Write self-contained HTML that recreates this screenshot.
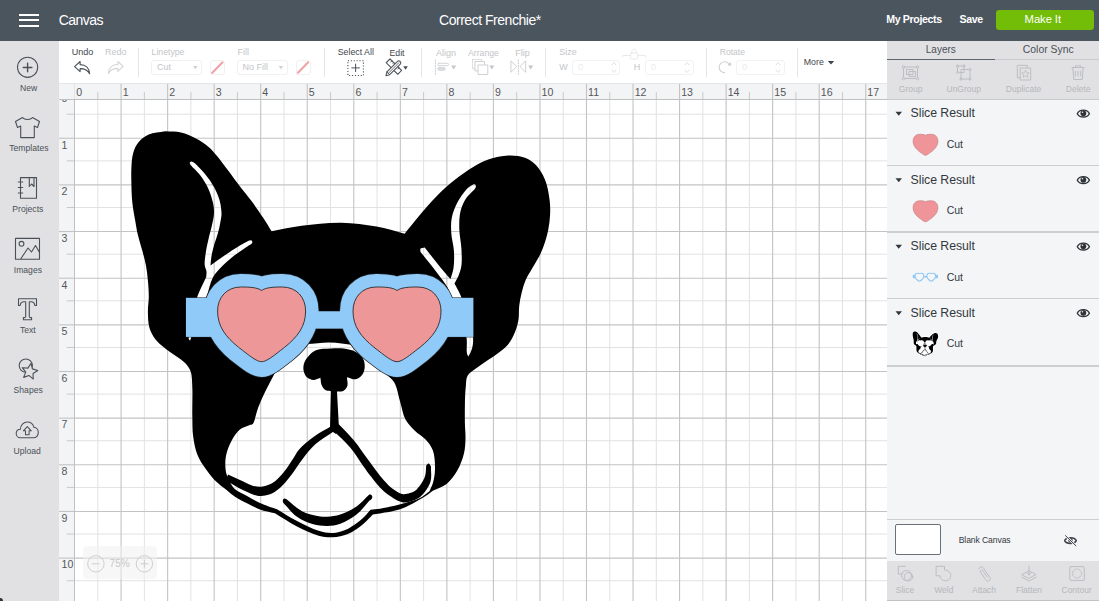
<!DOCTYPE html>
<html><head><meta charset="utf-8">
<style>
*{margin:0;padding:0;box-sizing:border-box}
html,body{width:1099px;height:601px;overflow:hidden;background:#fff;font-family:"Liberation Sans",sans-serif}
.a{position:absolute;white-space:nowrap;line-height:1}
svg.a{overflow:visible}
.sl{font-size:8.6px;color:#4a5058}
.tl{font-size:9px;color:#3f454c}
.dis{color:#c3c5c8}
.sep{position:absolute;width:1px;background:#e6e6e6;top:48px;height:29px}
.box{position:absolute;border:1px solid #f1f1f1;border-radius:3px;height:15px;top:60px}
.lr{font-size:12.3px;color:#33383d;letter-spacing:-0.05px}
.cut{font-size:10.5px;color:#33383d}
.rsep{position:absolute;left:887px;width:212px;height:1.5px;background:#cdced0}
.bl{font-size:8.5px;color:#b5b7ba}
</style></head><body>
<div class="a" style="left:0;top:0;width:1099px;height:41px;background:#4b555e"></div>
<div class="a" style="left:19px;top:13.8px;width:19.6px;height:1.8px;background:#fff"></div>
<div class="a" style="left:19px;top:19.3px;width:19.6px;height:1.8px;background:#fff"></div>
<div class="a" style="left:19px;top:24.9px;width:19.6px;height:1.8px;background:#fff"></div>
<div class="a" style="left:58.8px;top:13.1px;font-size:14px;color:#fff;letter-spacing:-0.55px">Canvas</div>
<div class="a" style="left:439px;top:13.0px;font-size:14px;color:#fff;letter-spacing:-0.47px">Correct Frenchie*</div>
<div class="a" style="left:886.2px;top:14.2px;font-size:10.6px;font-weight:bold;color:#fff;letter-spacing:-0.35px">My Projects</div>
<div class="a" style="left:959.5px;top:14.0px;font-size:10.6px;font-weight:bold;color:#fff;letter-spacing:-0.35px">Save</div>
<div class="a" style="left:996px;top:9.8px;width:97.5px;height:19.8px;background:#73bc07;border-radius:3px"></div>
<div class="a" style="left:1024.6px;top:14.3px;font-size:11.3px;color:#fff;letter-spacing:-0.1px">Make It</div>

<!-- left sidebar -->
<div class="a" style="left:0;top:41px;width:59px;height:560px;background:#e1e1e3"></div>
<svg class="a" style="left:0;top:0" width="59" height="601" fill="none" stroke="#4a5058" stroke-width="1.1" stroke-linejoin="round" stroke-linecap="round">
 <circle cx="27.6" cy="67.3" r="10.1"/>
 <path d="M23.3,67.5 H31.9 M27.6,63.3 V71.8" stroke-width="1.4"/>
 <!-- tshirt -->
 <path d="M22.5,117.6 C24.5,120.2 30.5,120.2 32.5,117.6 L39.5,121.5 L37.5,127.5 L34.3,126 L34.3,137.6 H20.7 V126 L17.5,127.5 L15.5,121.5 Z"/>
 <!-- projects notebook -->
 <path d="M20.5,177.6 H36.5 V198.2 H20.5 Z M29.3,177.6 V186.5 L31.6,184 L34,186.5 V177.6 M18.3,182 H22.7 M18.3,187.5 H22.7 M18.3,193 H22.7"/>
 <!-- images -->
 <path d="M15.5,238.4 H39.5 V259.2 H15.5 Z M20.5,259.2 L28,248 L31.5,252 L35.5,245.5 L39.5,252.5"/>
 <circle cx="21.5" cy="243.8" r="2.4"/>
 <!-- text T -->
 <path d="M18.5,298.8 H36.5 V305.5 L34.8,305.5 C34.5,302.5 33.5,301.8 31,301.8 H29.3 V316.7 C29.3,317.4 29.8,317.6 30.8,317.6 H31.6 V319.8 H23.4 V317.6 H24.2 C25.2,317.6 25.7,317.4 25.7,316.7 V301.8 H24 C21.5,301.8 20.5,302.5 20.2,305.5 L18.5,305.5 Z"/>
 <!-- shapes -->
 <circle cx="25.8" cy="365.6" r="6.6"/>
 <path d="M31.04,363.43 L32.41,368.89 L37.82,370.44 L33.04,373.43 L33.24,379.06 L28.92,375.44 L23.63,377.37 L25.74,372.14 L22.27,367.70 L27.89,368.09 Z" fill="#e1e1e3"/>
 <!-- upload cloud -->
 <path d="M20.5,437.8 C17.8,437.8 16.2,435.6 16.2,433.4 C16.2,431 18,429.2 20.4,429.2 C20.4,425 23.6,422 27.3,422 C30.6,422 33.2,424.3 33.9,427.3 C36.4,427.5 38.3,429.8 38.3,432.6 C38.3,435.5 36.2,437.8 33.6,437.8 Z"/>
 <path d="M27.3,426.6 L31.3,430.8 H29.1 V434.8 H25.5 V430.8 H23.3 Z" stroke-width="1.05"/>
</svg>
<div class="a sl" style="left:20px;top:83.6px">New</div>
<div class="a sl" style="left:9.3px;top:144.1px">Templates</div>
<div class="a sl" style="left:12.3px;top:204.7px">Projects</div>
<div class="a sl" style="left:13.8px;top:265.5px">Images</div>
<div class="a sl" style="left:20px;top:326.0px">Text</div>
<div class="a sl" style="left:13.6px;top:386.3px">Shapes</div>
<div class="a sl" style="left:13.6px;top:447.1px">Upload</div>

<!-- toolbar -->
<div class="a" style="left:59px;top:41px;width:828px;height:42px;background:#fff"></div>
<div class="a tl" style="left:71.8px;top:48.4px">Undo</div>
<div class="a tl dis" style="left:105px;top:48.4px">Redo</div>
<svg class="a" style="left:0;top:0" width="887" height="83" fill="none" stroke-linejoin="round" stroke-linecap="round">
 <path d="M80.1,61.5 L74.6,66.6 L80.1,71.6 V68.6 C84.2,68.6 87.8,70 89.6,73.8 C89.4,68.3 85.8,64.6 80.1,64.6 Z" stroke="#4a5058" stroke-width="1.1"/>
 <path d="M117.9,61.5 L123.2,66.4 L117.9,71.4 V68.4 C113.9,68.4 110.3,69.8 108.4,73.6 C108.6,68.1 112.2,64.4 117.9,64.4 Z" stroke="#d3d5d8" stroke-width="1.1"/>
 <!-- select all -->
 <rect x="347.9" y="60.7" width="15.5" height="14.8" stroke="#4a5058" stroke-width="1.1" stroke-dasharray="1.1 1.8" stroke-linecap="butt"/>
 <path d="M351.8,67.9 H359.4 M355.6,64.1 V71.6" stroke="#4a5058" stroke-width="1"/>
 <!-- edit icon -->
 <g transform="translate(393.9,66.6) rotate(45)" stroke="#4a5058" stroke-width="1.05">
  <rect x="-8.2" y="-2.7" width="16.4" height="5.4" fill="#fff"/>
  <path d="M-5.5,-2.7 v1.8 M-3,-2.7 v1.1 M-0.5,-2.7 v1.8 M2,-2.7 v1.1 M4.5,-2.7 v1.8" stroke-width="0.8"/>
 </g>
 <g transform="translate(393.6,68) rotate(-45)" stroke="#4a5058" stroke-width="1.05">
  <path d="M-7.5,-2 H7.5 C8.6,-2 9.2,-1.1 9.2,0 C9.2,1.1 8.6,2 7.5,2 H-7.5 L-10.8,0 Z" fill="#fff"/>
  <path d="M-7.5,-2 V2 M-7.5,0 H7.5" stroke-width="0.8"/>
 </g>
 <path d="M403.2,66.2 H407.9 L405.55,69.8 Z" fill="#4a5058" stroke="none"/>
 <!-- align -->
 <path d="M435.4,59.8 V74.5" stroke="#cfd1d4" stroke-width="1" stroke-dasharray="1.3 1.4"/>
 <rect x="437.8" y="63.3" width="10.7" height="2.3" rx="1.1" stroke="#cfd1d4" stroke-width="0.9"/>
 <rect x="437.8" y="67.4" width="7.4" height="2.8" rx="1.4" fill="#dcdee0" stroke="#cfd1d4" stroke-width="0.9"/>
 <path d="M451.2,65.6 H456.1 L453.65,69.6 Z" fill="#c3c5c8" stroke="none"/>
 <!-- arrange -->
 <rect x="472.6" y="59.6" width="9.2" height="9.2" stroke="#cfd1d4" stroke-width="0.9" stroke-dasharray="1.2 1.2"/>
 <rect x="475.3" y="61.5" width="9.2" height="9.4" stroke="#cfd1d4" stroke-width="1" fill="#fff"/>
 <rect x="478.4" y="65" width="9.4" height="9.5" stroke="#cfd1d4" stroke-width="1" fill="#fff"/>
 <path d="M489.4,65.6 H494.3 L491.85,69.6 Z" fill="#c3c5c8" stroke="none"/>
 <!-- flip -->
 <path d="M511.2,61.1 L516.7,66.6 L511.2,72 Z M525.4,61.1 L519.9,66.6 L525.4,72 Z" stroke="#cfd1d4" stroke-width="1"/>
 <path d="M518.4,59.8 V74.5" stroke="#cfd1d4" stroke-width="1" stroke-dasharray="1.3 1.4"/>
 <path d="M528.2,65.6 H533.1 L530.65,69.6 Z" fill="#c3c5c8" stroke="none"/>
 <!-- linetype swatch -->
 <path d="M211.8,73.3 L222.6,62.3" stroke="#eea3a8" stroke-width="2.1"/>
 <path d="M297.4,73.3 L308.2,62.3" stroke="#eea3a8" stroke-width="2.1"/>
 <path d="M193,66 H197.6 L195.3,69.2 Z M278.6,66 H283.2 L280.9,69.2 Z" fill="#cfd1d4" stroke="none"/>
 <!-- lock -->
 <path d="M622.8,57 V55.5 H630 M638.3,55.5 H645.5 V57" stroke="#e6e7e9" stroke-width="0.9"/>
 <rect x="630.6" y="53" width="7" height="6" rx="1" stroke="#e6e7e9" stroke-width="0.9"/>
 <path d="M631.8,53 V51.5 C631.8,48.5 636.4,48.5 636.4,51.5 V53" stroke="#e6e7e9" stroke-width="0.9"/>
 <!-- spinners -->
 <path d="M612,65 L614,62.5 L616,65 M612,70 L614,72.5 L616,70 M685,65 L687,62.5 L689,65 M685,70 L687,72.5 L689,70 M776,65 L778,62.5 L780,65 M776,70 L778,72.5 L780,70" stroke="#dedfe1" stroke-width="0.9"/>
 <!-- rotate -->
 <path d="M729.4,65.3 C728.5,63 726.5,61.8 724.6,61.8 C721.6,61.8 719.2,64.2 719.2,67.2 C719.2,70.2 721.6,72.6 724.6,72.6" stroke="#cfd1d4" stroke-width="1.1"/>
 <path d="M727.5,65.5 L731.5,65.5 L730.5,61.8 Z" fill="#cfd1d4" stroke="none"/>
 <!-- more -->
 <path d="M827.8,61 H834.2 L831,64.5 Z" fill="#3f454c" stroke="none"/>
</svg>
<div class="sep" style="left:137.7px"></div>
<div class="sep" style="left:323.8px"></div>
<div class="sep" style="left:420.5px"></div>
<div class="sep" style="left:545.3px"></div>
<div class="sep" style="left:705.8px"></div>
<div class="sep" style="left:797.3px"></div>
<div class="a tl dis" style="left:151.6px;top:48.4px;font-size:8.7px">Linetype</div>
<div class="box" style="left:151.4px;width:51px"></div>
<div class="a tl dis" style="left:157px;top:62.8px">Cut</div>
<div class="box" style="left:209.8px;width:15px"></div>
<div class="a tl dis" style="left:237.6px;top:48.4px">Fill</div>
<div class="box" style="left:237.4px;width:51px"></div>
<div class="a tl dis" style="left:242.5px;top:62.8px">No Fill</div>
<div class="box" style="left:295.8px;width:15px"></div>
<div class="a tl" style="left:337.7px;top:48.3px;font-size:8.8px">Select All</div>
<div class="a tl" style="left:389.5px;top:48.8px;font-size:8.7px">Edit</div>
<div class="a tl dis" style="left:436px;top:48.8px">Align</div>
<div class="a tl dis" style="left:468px;top:48.8px;font-size:8.7px">Arrange</div>
<div class="a tl dis" style="left:515.3px;top:48.8px">Flip</div>
<div class="a tl dis" style="left:559.2px;top:48.4px">Size</div>
<div class="a tl dis" style="left:559.3px;top:63px">W</div>
<div class="box" style="left:571.8px;width:48px;border-color:#f2f2f2"></div>
<div class="a tl" style="left:578px;top:63px;color:#eceded">0</div>
<div class="a tl dis" style="left:633.7px;top:63px">H</div>
<div class="box" style="left:644.6px;width:49px;border-color:#f2f2f2"></div>
<div class="a tl" style="left:651px;top:63px;color:#eceded">0</div>
<div class="a tl dis" style="left:719.7px;top:48.4px;font-size:8.6px">Rotate</div>
<div class="box" style="left:736px;width:48.5px;border-color:#f2f2f2"></div>
<div class="a tl" style="left:742px;top:63px;color:#eceded">0</div>
<div class="a tl" style="left:803.8px;top:57.6px;font-size:8.8px">More</div>

<!-- CANVAS -->
<svg class="a" style="left:0;top:0;font-family:'Liberation Sans'" width="1099" height="601">
<rect x="74.5" y="99.5" width="812.5" height="502" fill="#fff"/>
<line x1="97.82" y1="100" x2="97.82" y2="601" stroke="#e2e2e2" stroke-width="1"/>
<line x1="144.36" y1="100" x2="144.36" y2="601" stroke="#e2e2e2" stroke-width="1"/>
<line x1="190.90" y1="100" x2="190.90" y2="601" stroke="#e2e2e2" stroke-width="1"/>
<line x1="237.44" y1="100" x2="237.44" y2="601" stroke="#e2e2e2" stroke-width="1"/>
<line x1="283.98" y1="100" x2="283.98" y2="601" stroke="#e2e2e2" stroke-width="1"/>
<line x1="330.52" y1="100" x2="330.52" y2="601" stroke="#e2e2e2" stroke-width="1"/>
<line x1="377.06" y1="100" x2="377.06" y2="601" stroke="#e2e2e2" stroke-width="1"/>
<line x1="423.60" y1="100" x2="423.60" y2="601" stroke="#e2e2e2" stroke-width="1"/>
<line x1="470.14" y1="100" x2="470.14" y2="601" stroke="#e2e2e2" stroke-width="1"/>
<line x1="516.68" y1="100" x2="516.68" y2="601" stroke="#e2e2e2" stroke-width="1"/>
<line x1="563.22" y1="100" x2="563.22" y2="601" stroke="#e2e2e2" stroke-width="1"/>
<line x1="609.76" y1="100" x2="609.76" y2="601" stroke="#e2e2e2" stroke-width="1"/>
<line x1="656.30" y1="100" x2="656.30" y2="601" stroke="#e2e2e2" stroke-width="1"/>
<line x1="702.84" y1="100" x2="702.84" y2="601" stroke="#e2e2e2" stroke-width="1"/>
<line x1="749.38" y1="100" x2="749.38" y2="601" stroke="#e2e2e2" stroke-width="1"/>
<line x1="795.92" y1="100" x2="795.92" y2="601" stroke="#e2e2e2" stroke-width="1"/>
<line x1="842.46" y1="100" x2="842.46" y2="601" stroke="#e2e2e2" stroke-width="1"/>
<line x1="74.5" y1="114.22" x2="887" y2="114.22" stroke="#e2e2e2" stroke-width="1"/>
<line x1="74.5" y1="160.88" x2="887" y2="160.88" stroke="#e2e2e2" stroke-width="1"/>
<line x1="74.5" y1="207.53" x2="887" y2="207.53" stroke="#e2e2e2" stroke-width="1"/>
<line x1="74.5" y1="254.18" x2="887" y2="254.18" stroke="#e2e2e2" stroke-width="1"/>
<line x1="74.5" y1="300.82" x2="887" y2="300.82" stroke="#e2e2e2" stroke-width="1"/>
<line x1="74.5" y1="347.47" x2="887" y2="347.47" stroke="#e2e2e2" stroke-width="1"/>
<line x1="74.5" y1="394.12" x2="887" y2="394.12" stroke="#e2e2e2" stroke-width="1"/>
<line x1="74.5" y1="440.78" x2="887" y2="440.78" stroke="#e2e2e2" stroke-width="1"/>
<line x1="74.5" y1="487.43" x2="887" y2="487.43" stroke="#e2e2e2" stroke-width="1"/>
<line x1="74.5" y1="534.07" x2="887" y2="534.07" stroke="#e2e2e2" stroke-width="1"/>
<line x1="74.5" y1="580.72" x2="887" y2="580.72" stroke="#e2e2e2" stroke-width="1"/>
<line x1="74.5" y1="627.38" x2="887" y2="627.38" stroke="#e2e2e2" stroke-width="1"/>
<line x1="121.09" y1="100" x2="121.09" y2="601" stroke="#c3c3c3" stroke-width="1.1"/>
<line x1="167.63" y1="100" x2="167.63" y2="601" stroke="#c3c3c3" stroke-width="1.1"/>
<line x1="214.17" y1="100" x2="214.17" y2="601" stroke="#c3c3c3" stroke-width="1.1"/>
<line x1="260.71" y1="100" x2="260.71" y2="601" stroke="#c3c3c3" stroke-width="1.1"/>
<line x1="307.25" y1="100" x2="307.25" y2="601" stroke="#c3c3c3" stroke-width="1.1"/>
<line x1="353.79" y1="100" x2="353.79" y2="601" stroke="#c3c3c3" stroke-width="1.1"/>
<line x1="400.33" y1="100" x2="400.33" y2="601" stroke="#c3c3c3" stroke-width="1.1"/>
<line x1="446.87" y1="100" x2="446.87" y2="601" stroke="#c3c3c3" stroke-width="1.1"/>
<line x1="493.41" y1="100" x2="493.41" y2="601" stroke="#c3c3c3" stroke-width="1.1"/>
<line x1="539.95" y1="100" x2="539.95" y2="601" stroke="#c3c3c3" stroke-width="1.1"/>
<line x1="586.49" y1="100" x2="586.49" y2="601" stroke="#c3c3c3" stroke-width="1.1"/>
<line x1="633.03" y1="100" x2="633.03" y2="601" stroke="#c3c3c3" stroke-width="1.1"/>
<line x1="679.57" y1="100" x2="679.57" y2="601" stroke="#c3c3c3" stroke-width="1.1"/>
<line x1="726.11" y1="100" x2="726.11" y2="601" stroke="#c3c3c3" stroke-width="1.1"/>
<line x1="772.65" y1="100" x2="772.65" y2="601" stroke="#c3c3c3" stroke-width="1.1"/>
<line x1="819.19" y1="100" x2="819.19" y2="601" stroke="#c3c3c3" stroke-width="1.1"/>
<line x1="865.73" y1="100" x2="865.73" y2="601" stroke="#c3c3c3" stroke-width="1.1"/>
<line x1="74.5" y1="138.25" x2="887" y2="138.25" stroke="#c3c3c3" stroke-width="1.1"/>
<line x1="74.5" y1="184.90" x2="887" y2="184.90" stroke="#c3c3c3" stroke-width="1.1"/>
<line x1="74.5" y1="231.55" x2="887" y2="231.55" stroke="#c3c3c3" stroke-width="1.1"/>
<line x1="74.5" y1="278.20" x2="887" y2="278.20" stroke="#c3c3c3" stroke-width="1.1"/>
<line x1="74.5" y1="324.85" x2="887" y2="324.85" stroke="#c3c3c3" stroke-width="1.1"/>
<line x1="74.5" y1="371.50" x2="887" y2="371.50" stroke="#c3c3c3" stroke-width="1.1"/>
<line x1="74.5" y1="418.15" x2="887" y2="418.15" stroke="#c3c3c3" stroke-width="1.1"/>
<line x1="74.5" y1="464.80" x2="887" y2="464.80" stroke="#c3c3c3" stroke-width="1.1"/>
<line x1="74.5" y1="511.45" x2="887" y2="511.45" stroke="#c3c3c3" stroke-width="1.1"/>
<line x1="74.5" y1="558.10" x2="887" y2="558.10" stroke="#c3c3c3" stroke-width="1.1"/>
<defs><mask id="dm" maskUnits="userSpaceOnUse" x="0" y="0" width="1099" height="601">
<rect x="0" y="0" width="1099" height="601" fill="#fff"/>
<path d="M306.6,344.1 C314.4,343.5 322.1,342.3 329.9,342.4 C337.7,342.5 345.4,344.1 353.2,344.9 L353.2,344.9 C359.5,347.3 367.0,347.8 372.0,352.0 C377.5,356.6 380.1,365.6 384.1,372.4 L384.1,372.4 C387.4,375.6 391.4,377.8 394.0,382.0 C397.1,387.0 398.1,394.9 400.0,401.2 C401.9,407.4 402.8,414.4 405.5,419.5 C407.9,423.9 411.2,427.1 414.6,430.5 C418.0,433.9 422.5,436.2 425.6,439.6 C428.6,442.9 431.3,446.2 432.9,450.6 C434.8,455.8 435.1,463.7 435.0,469.3 C434.9,473.9 434.2,478.2 433.2,482.0 C432.3,485.4 430.7,488.1 429.5,491.2 L429.5,491.2 C426.3,493.5 423.8,496.1 420.0,498.0 C415.1,500.4 408.4,502.0 402.1,503.7 C395.2,505.6 385.8,507.7 380.0,508.7 C376.2,509.3 373.7,509.4 370.6,509.7 L370.6,509.7 C367.7,512.8 365.4,515.9 361.9,518.9 C357.5,522.6 351.0,527.4 345.7,529.8 C341.3,531.7 337.1,532.8 332.7,533.0 C328.1,533.2 323.8,532.3 318.7,530.8 C312.1,528.9 304.0,524.7 297.0,521.1 C290.0,517.5 283.3,513.0 276.5,509.0 L276.5,509.0 C276.1,508.9 276.0,508.9 275.4,508.7 C273.2,508.0 264.8,505.2 260.0,503.0 C255.5,501.0 251.7,498.6 247.5,496.3 C243.3,494.0 237.8,491.7 235.0,489.3 C233.2,487.8 232.5,486.2 231.3,484.6 L231.3,484.6 C229.7,481.3 227.6,478.1 226.6,474.6 C225.6,471.2 225.3,467.5 225.3,464.0 C225.3,460.4 225.6,457.0 226.6,453.3 C227.7,449.0 229.7,444.0 232.0,440.0 C234.2,436.1 236.7,432.0 239.9,429.5 C242.8,427.2 246.6,426.4 249.9,424.9 L249.9,424.9 C250.8,424.6 251.8,424.9 252.7,424.0 C254.8,421.9 256.1,413.0 258.2,407.6 C260.3,402.1 262.8,396.7 265.5,391.1 C268.4,385.1 271.8,378.9 275.0,372.8 L275.0,372.8 C280.0,365.9 284.2,356.9 290.0,352.0 C294.9,347.9 301.1,346.7 306.6,344.1 Z" fill="#000"/>
<path d="M191.0,161.5 C191.7,161.7 192.1,161.5 193.0,162.0 C195.5,163.4 201.5,169.8 205.0,174.0 C208.4,178.1 211.5,182.5 214.0,187.0 C216.3,191.2 218.2,195.6 219.5,200.0 C220.7,204.3 221.4,209.1 221.5,213.0 C221.6,216.3 220.9,218.9 220.4,222.0 C219.8,225.5 219.0,229.4 218.0,233.0 C217.0,236.7 215.5,240.2 214.4,244.0 C213.3,247.9 212.2,252.2 211.5,256.0 C210.9,259.3 210.8,262.3 210.5,265.5 L210.5,265.5 C215.3,262.1 220.0,258.5 224.9,255.2 C229.8,251.9 235.5,248.1 239.9,245.5 C243.1,243.6 245.6,242.4 248.5,240.8 L248.5,240.8 C249.5,240.7 250.9,240.1 251.5,240.5 C252.1,240.9 252.5,242.1 252.3,242.8 C252.1,243.5 251.1,243.9 250.5,244.5 L250.5,244.5 C249.5,245.1 248.8,245.5 247.4,246.4 C244.3,248.5 237.0,253.2 232.4,256.9 C228.0,260.4 223.8,264.3 220.4,268.0 C217.5,271.2 215.0,273.5 212.9,277.5 C210.1,282.7 208.9,290.4 206.4,297.1 C203.7,304.5 199.8,312.5 197.0,320.0 C194.4,327.0 192.5,333.7 190.2,340.5 L190.2,340.5 C189.7,340.0 189.1,339.9 188.8,339.0 C188.0,336.3 190.7,326.6 192.0,320.0 C193.4,312.7 194.8,304.4 197.2,297.1 C199.6,290.0 203.2,283.6 206.2,276.9 L206.2,276.9 C206.3,275.1 206.7,273.4 206.5,271.5 C206.3,269.4 204.9,267.6 204.7,264.9 C204.4,261.0 205.5,254.5 206.2,250.0 C206.8,246.3 207.5,243.7 208.3,240.0 C209.3,235.5 211.0,229.8 212.0,225.1 C212.9,220.9 213.9,216.8 214.0,213.0 C214.1,209.5 213.8,206.6 213.0,203.0 C212.0,198.5 210.2,192.7 208.0,188.0 C205.8,183.4 203.0,179.0 200.0,175.0 C197.0,171.0 191.0,166.2 190.0,164.0 C189.7,163.3 189.9,162.9 189.8,162.3 Z" fill="#000"/>
<path d="M475.1,184.2 C475.4,185.1 476.1,185.8 475.9,186.9 C475.3,189.6 468.4,194.5 465.8,198.8 C463.3,202.8 461.5,207.0 460.4,211.7 C459.2,217.0 459.2,223.1 459.3,229.0 C459.4,235.3 461.1,242.2 461.4,248.5 C461.7,254.4 462.1,260.7 461.4,265.7 C460.8,269.8 459.5,273.3 458.2,276.5 C457.1,279.1 455.7,281.2 454.5,283.5 L454.5,283.5 C456.5,287.3 458.4,290.5 460.4,294.9 C462.9,300.6 465.9,308.1 468.0,315.0 C470.1,322.1 472.5,331.3 473.0,337.0 C473.3,340.6 473.1,343.2 472.6,346.0 C472.1,348.5 471.2,351.1 470.3,353.0 C469.7,354.4 469.0,355.3 468.3,356.4 L468.3,356.4 C467.8,355.3 467.2,354.6 466.9,353.0 C466.2,349.7 467.5,342.5 466.4,337.0 C465.1,330.8 461.4,324.4 459.0,318.0 C456.5,311.5 453.8,303.7 451.7,298.1 C450.1,293.9 449.5,291.1 447.4,287.3 C444.8,282.5 440.6,277.6 436.6,272.2 C431.8,265.8 425.8,258.5 420.4,251.7 L420.4,251.7 C420.5,250.7 420.0,249.3 420.6,248.6 C421.3,247.8 423.3,247.8 424.7,247.4 L424.7,247.4 C430.1,254.2 436.1,262.2 440.9,267.9 C444.5,272.2 447.3,275.3 450.5,279.0 L450.5,279.0 C451.5,275.3 452.9,272.0 453.5,267.9 C454.2,262.8 454.3,256.4 453.9,250.6 C453.5,244.8 451.6,238.9 451.3,233.3 C451.0,228.1 450.8,223.2 451.7,218.2 C452.7,213.1 454.6,207.9 457.1,203.1 C459.6,198.1 463.6,192.3 466.8,189.0 C469.0,186.7 471.3,185.9 473.5,184.3 Z" fill="#000"/>
</mask>
<mask id="dm2" maskUnits="userSpaceOnUse" x="0" y="0" width="1099" height="601">
<rect x="0" y="0" width="1099" height="601" fill="#fff"/>
<path d="M306.6,344.1 C314.4,343.5 322.1,342.3 329.9,342.4 C337.7,342.5 345.4,344.1 353.2,344.9 L353.2,344.9 C359.5,347.3 367.0,347.8 372.0,352.0 C377.5,356.6 380.1,365.6 384.1,372.4 L384.1,372.4 C387.4,375.6 391.4,377.8 394.0,382.0 C397.1,387.0 398.1,394.9 400.0,401.2 C401.9,407.4 402.8,414.4 405.5,419.5 C407.9,423.9 411.2,427.1 414.6,430.5 C418.0,433.9 422.5,436.2 425.6,439.6 C428.6,442.9 431.3,446.2 432.9,450.6 C434.8,455.8 435.1,463.7 435.0,469.3 C434.9,473.9 434.2,478.2 433.2,482.0 C432.3,485.4 430.7,488.1 429.5,491.2 L429.5,491.2 C426.3,493.5 423.8,496.1 420.0,498.0 C415.1,500.4 408.4,502.0 402.1,503.7 C395.2,505.6 385.8,507.7 380.0,508.7 C376.2,509.3 373.7,509.4 370.6,509.7 L370.6,509.7 C367.7,512.8 365.4,515.9 361.9,518.9 C357.5,522.6 351.0,527.4 345.7,529.8 C341.3,531.7 337.1,532.8 332.7,533.0 C328.1,533.2 323.8,532.3 318.7,530.8 C312.1,528.9 304.0,524.7 297.0,521.1 C290.0,517.5 283.3,513.0 276.5,509.0 L276.5,509.0 C276.1,508.9 276.0,508.9 275.4,508.7 C273.2,508.0 264.8,505.2 260.0,503.0 C255.5,501.0 251.7,498.6 247.5,496.3 C243.3,494.0 237.8,491.7 235.0,489.3 C233.2,487.8 232.5,486.2 231.3,484.6 L231.3,484.6 C229.7,481.3 227.6,478.1 226.6,474.6 C225.6,471.2 225.3,467.5 225.3,464.0 C225.3,460.4 225.6,457.0 226.6,453.3 C227.7,449.0 229.7,444.0 232.0,440.0 C234.2,436.1 236.7,432.0 239.9,429.5 C242.8,427.2 246.6,426.4 249.9,424.9 L249.9,424.9 C250.8,424.6 251.8,424.9 252.7,424.0 C254.8,421.9 256.1,413.0 258.2,407.6 C260.3,402.1 262.8,396.7 265.5,391.1 C268.4,385.1 271.8,378.9 275.0,372.8 L275.0,372.8 C280.0,365.9 284.2,356.9 290.0,352.0 C294.9,347.9 301.1,346.7 306.6,344.1 Z" fill="#000"/>
<path d="M191.0,161.5 C191.7,161.7 192.1,161.5 193.0,162.0 C195.5,163.4 201.5,169.8 205.0,174.0 C208.4,178.1 211.5,182.5 214.0,187.0 C216.3,191.2 218.2,195.6 219.5,200.0 C220.7,204.3 221.4,209.1 221.5,213.0 C221.6,216.3 220.9,218.9 220.4,222.0 C219.8,225.5 219.0,229.4 218.0,233.0 C217.0,236.7 215.5,240.2 214.4,244.0 C213.3,247.9 212.2,252.2 211.5,256.0 C210.9,259.3 210.8,262.3 210.5,265.5 L210.5,265.5 C215.3,262.1 220.0,258.5 224.9,255.2 C229.8,251.9 235.5,248.1 239.9,245.5 C243.1,243.6 245.6,242.4 248.5,240.8 L248.5,240.8 C249.5,240.7 250.9,240.1 251.5,240.5 C252.1,240.9 252.5,242.1 252.3,242.8 C252.1,243.5 251.1,243.9 250.5,244.5 L250.5,244.5 C249.5,245.1 248.8,245.5 247.4,246.4 C244.3,248.5 237.0,253.2 232.4,256.9 C228.0,260.4 223.8,264.3 220.4,268.0 C217.5,271.2 215.0,273.5 212.9,277.5 C210.1,282.7 208.9,290.4 206.4,297.1 C203.7,304.5 199.8,312.5 197.0,320.0 C194.4,327.0 192.5,333.7 190.2,340.5 L190.2,340.5 C189.7,340.0 189.1,339.9 188.8,339.0 C188.0,336.3 190.7,326.6 192.0,320.0 C193.4,312.7 194.8,304.4 197.2,297.1 C199.6,290.0 203.2,283.6 206.2,276.9 L206.2,276.9 C206.3,275.1 206.7,273.4 206.5,271.5 C206.3,269.4 204.9,267.6 204.7,264.9 C204.4,261.0 205.5,254.5 206.2,250.0 C206.8,246.3 207.5,243.7 208.3,240.0 C209.3,235.5 211.0,229.8 212.0,225.1 C212.9,220.9 213.9,216.8 214.0,213.0 C214.1,209.5 213.8,206.6 213.0,203.0 C212.0,198.5 210.2,192.7 208.0,188.0 C205.8,183.4 203.0,179.0 200.0,175.0 C197.0,171.0 191.0,166.2 190.0,164.0 C189.7,163.3 189.9,162.9 189.8,162.3 Z" fill="#000"/>
<path d="M475.1,184.2 C475.4,185.1 476.1,185.8 475.9,186.9 C475.3,189.6 468.4,194.5 465.8,198.8 C463.3,202.8 461.5,207.0 460.4,211.7 C459.2,217.0 459.2,223.1 459.3,229.0 C459.4,235.3 461.1,242.2 461.4,248.5 C461.7,254.4 462.1,260.7 461.4,265.7 C460.8,269.8 459.5,273.3 458.2,276.5 C457.1,279.1 455.7,281.2 454.5,283.5 L454.5,283.5 C456.5,287.3 458.4,290.5 460.4,294.9 C462.9,300.6 465.9,308.1 468.0,315.0 C470.1,322.1 472.5,331.3 473.0,337.0 C473.3,340.6 473.1,343.2 472.6,346.0 C472.1,348.5 471.2,351.1 470.3,353.0 C469.7,354.4 469.0,355.3 468.3,356.4 L468.3,356.4 C467.8,355.3 467.2,354.6 466.9,353.0 C466.2,349.7 467.5,342.5 466.4,337.0 C465.1,330.8 461.4,324.4 459.0,318.0 C456.5,311.5 453.8,303.7 451.7,298.1 C450.1,293.9 449.5,291.1 447.4,287.3 C444.8,282.5 440.6,277.6 436.6,272.2 C431.8,265.8 425.8,258.5 420.4,251.7 L420.4,251.7 C420.5,250.7 420.0,249.3 420.6,248.6 C421.3,247.8 423.3,247.8 424.7,247.4 L424.7,247.4 C430.1,254.2 436.1,262.2 440.9,267.9 C444.5,272.2 447.3,275.3 450.5,279.0 L450.5,279.0 C451.5,275.3 452.9,272.0 453.5,267.9 C454.2,262.8 454.3,256.4 453.9,250.6 C453.5,244.8 451.6,238.9 451.3,233.3 C451.0,228.1 450.8,223.2 451.7,218.2 C452.7,213.1 454.6,207.9 457.1,203.1 C459.6,198.1 463.6,192.3 466.8,189.0 C469.0,186.7 471.3,185.9 473.5,184.3 Z" fill="#000"/>
<rect x="186" y="297.9" width="30" height="39" fill="#000"/>
<rect x="443" y="297.9" width="30.3" height="39" fill="#000"/>
<rect x="300" y="311.3" width="60" height="17.3" fill="#000"/>
<path d="M261.6,290.5 C265.6,287.5 273.6,286.9 282.6,287.0 C296.6,287.1 305.6,297.5 305.6,311.0 C305.6,326.5 297.6,339.1 284.6,349.6 C273.6,358.1 266.6,364.0 261.6,364.0 C256.6,364.0 249.6,358.1 238.6,349.6 C225.6,339.1 217.6,326.5 217.6,311.0 C217.6,297.5 226.6,287.1 240.6,287.0 C249.6,286.9 257.6,287.5 261.6,290.5 Z" fill="#000" stroke="#000" stroke-width="26" stroke-linejoin="round"/>
<path d="M397.0,290.5 C401.0,287.5 409.0,286.9 418.0,287.0 C432.0,287.1 441.0,297.5 441.0,311.0 C441.0,326.5 433.0,339.1 420.0,349.6 C409.0,358.1 402.0,364.0 397.0,364.0 C392.0,364.0 385.0,358.1 374.0,349.6 C361.0,339.1 353.0,326.5 353.0,311.0 C353.0,297.5 362.0,287.1 376.0,287.0 C385.0,286.9 393.0,287.5 397.0,290.5 Z" fill="#000" stroke="#000" stroke-width="26" stroke-linejoin="round"/>
</mask>
<path id="dsil" d="M165.2,131.3 C170.5,131.7 175.9,131.3 181.0,132.5 C186.2,133.7 191.4,136.1 196.0,138.5 C200.4,140.8 204.4,143.5 208.0,146.5 C211.4,149.4 213.5,151.8 217.0,156.0 C223.1,163.2 233.6,178.2 240.0,186.5 C244.5,192.3 247.7,195.9 251.5,201.0 C255.5,206.3 259.7,212.5 263.2,217.8 C266.3,222.5 268.8,226.8 271.6,231.3 L271.6,231.3 C281.6,229.5 290.8,227.2 301.6,225.8 C313.9,224.2 328.7,222.6 341.5,222.8 C353.5,223.0 365.4,224.6 376.4,226.6 C386.4,228.4 395.2,231.3 404.6,233.7 L404.6,233.7 C409.4,227.8 413.9,222.0 419.0,216.0 C424.5,209.5 430.5,202.3 436.6,196.2 C442.5,190.3 448.6,184.8 454.9,179.8 C460.9,175.1 467.3,170.5 473.2,167.0 C478.4,164.0 482.8,161.5 488.3,159.6 C494.4,157.5 502.0,155.8 508.4,155.6 C514.2,155.4 520.1,156.0 524.9,157.8 C529.1,159.4 532.7,161.8 535.9,165.1 C539.6,168.9 542.7,174.3 545.0,179.8 C547.5,185.8 548.8,193.7 549.6,199.9 C550.3,205.1 550.3,209.6 550.1,214.5 C549.9,219.6 549.2,224.8 548.2,229.9 C547.2,235.0 545.6,240.3 544.0,244.9 C542.5,249.1 541.0,252.7 539.1,256.5 C537.1,260.4 534.6,264.2 532.4,268.1 C530.2,272.0 527.6,275.7 525.8,279.8 C524.0,284.0 522.7,288.7 521.6,293.1 C520.5,297.4 519.7,301.6 519.2,306.0 C518.7,310.4 519.2,315.1 518.5,319.5 C517.8,323.9 516.6,328.1 514.9,332.3 C513.1,336.7 510.7,341.4 507.6,345.1 C504.6,348.7 500.8,351.1 496.6,354.3 C491.4,358.2 483.9,362.6 478.7,366.5 C474.5,369.7 469.8,372.0 467.7,375.6 C465.8,378.8 466.3,382.5 465.8,386.6 C465.2,391.9 465.0,398.8 464.9,404.9 C464.8,411.0 464.8,417.4 464.9,423.2 C465.0,428.4 465.6,433.0 465.5,438.0 C465.4,443.1 465.2,448.1 464.0,453.3 C462.6,459.0 460.3,465.4 457.3,470.6 C454.4,475.6 450.8,480.5 446.6,483.9 C442.7,487.1 436.8,488.5 433.3,490.6 C430.9,492.1 430.2,493.1 427.5,494.8 C422.1,498.2 410.5,505.5 402.1,508.6 C394.7,511.4 385.4,512.5 380.0,513.5 C377.0,514.1 375.2,514.2 372.8,514.6 L372.8,514.6 C369.9,517.5 367.6,520.4 364.1,523.3 C359.7,526.9 353.4,531.8 347.9,534.1 C342.9,536.2 337.7,537.1 332.7,537.3 C328.0,537.5 323.8,537.0 318.7,535.7 C312.1,534.0 304.1,530.1 297.0,526.5 C289.6,522.7 282.3,517.7 275.0,513.3 L275.0,513.3 C270.0,512.0 264.7,511.2 260.0,509.5 C255.6,507.9 251.6,505.6 247.5,503.5 C243.3,501.4 238.5,499.1 235.0,496.7 C232.1,494.8 230.3,493.0 227.5,490.7 C223.7,487.6 218.2,483.7 214.5,479.9 C211.1,476.5 208.5,473.0 205.8,469.1 C202.8,464.8 199.6,460.2 197.5,455.0 C195.3,449.5 194.1,443.2 193.2,436.8 C192.2,429.9 192.5,422.6 192.3,414.9 C192.1,406.3 192.7,395.4 192.3,387.4 C192.0,381.2 192.2,375.5 190.5,371.0 C189.1,367.3 186.9,364.9 184.0,362.0 C180.4,358.4 174.6,355.6 170.0,352.0 C165.2,348.3 159.5,344.3 156.0,340.0 C153.0,336.3 150.9,332.5 149.5,328.0 C148.0,323.1 148.0,316.8 147.9,311.5 C147.8,306.5 148.8,301.8 148.8,296.8 C148.8,291.5 148.4,285.7 147.9,280.4 C147.4,275.4 146.9,270.6 146.0,265.7 C145.1,260.8 143.7,256.1 142.4,251.1 C141.0,245.8 139.0,240.0 137.8,234.6 C136.6,229.6 136.0,225.1 135.1,220.0 C134.1,214.4 132.9,208.3 132.3,202.3 C131.7,196.3 131.5,189.9 131.4,184.0 C131.3,178.4 131.1,172.9 131.4,167.6 C131.7,162.6 131.9,157.3 133.2,152.9 C134.4,148.9 136.1,145.0 138.7,142.0 C141.3,138.9 144.8,136.4 148.8,134.6 C153.4,132.6 159.7,132.4 165.2,131.3 Z"/>
<g id="dfeat" fill="#000">
<path d="M320.4,377.7 C318.1,378.4 315.7,380.0 313.4,379.9 C311.2,379.8 308.5,378.7 306.9,377.2 C305.2,375.7 304.1,373.0 303.6,370.7 C303.1,368.3 303.4,365.5 304.2,363.1 C305.1,360.4 307.0,357.7 309.1,355.5 C311.2,353.3 313.5,351.3 316.6,350.1 C320.4,348.6 326.1,348.8 330.7,348.5 C335.1,348.3 339.4,347.9 343.6,348.5 C347.7,349.1 352.2,349.9 355.5,351.8 C358.6,353.5 361.6,356.1 363.1,358.8 C364.5,361.3 364.9,364.6 364.7,367.4 C364.5,370.0 363.6,373.0 362.0,375.0 C360.5,377.0 357.9,378.9 355.5,379.3 C352.9,379.7 349.8,377.9 346.9,377.2 L346.9,377.2 C347.1,380.1 348.1,383.4 347.4,385.8 C346.8,387.8 345.5,389.7 343.6,390.7 C340.9,392.1 335.1,391.4 331.8,391.2 C329.3,391.0 327.0,391.2 325.3,390.1 C323.6,389.0 322.3,386.7 321.5,384.7 C320.7,382.6 320.8,380.0 320.4,377.7 Z"/>
<path d="M331,388 L336.8,388 L339,429 L336,434 L331.5,431 L330,427 Z"/>
<path d="M332.0,425.7 C325.9,429.4 319.4,432.6 313.8,436.7 C308.5,440.6 302.7,445.3 299.1,449.5 C296.4,452.6 295.4,455.3 293.2,458.6 C290.5,462.7 287.3,467.9 283.9,472.0 C280.6,475.9 277.0,480.1 273.2,482.6 C269.9,484.7 266.1,486.1 262.6,486.6 C259.4,487.1 256.6,486.7 253.3,485.9 C249.2,484.9 244.3,481.9 240.0,480.0 C235.9,478.2 232.0,476.4 228.0,474.6 L226.0,480.0 C228.0,481.3 230.0,482.7 232.0,484.0 L232.0,484.0 C236.0,486.2 239.6,488.7 243.9,490.6 C248.5,492.7 254.0,495.4 258.6,495.9 C262.4,496.3 265.8,495.8 269.2,494.6 C272.9,493.3 276.5,490.7 279.9,487.9 C283.7,484.7 287.0,480.4 290.5,476.0 C294.6,470.9 298.5,464.1 302.8,458.7 C306.9,453.5 310.6,448.5 315.6,444.0 C320.9,439.2 327.8,435.5 333.9,431.2 Z"/>
<path d="M338.5,423.9 C343.7,429.4 349.1,434.5 354.0,440.4 C359.2,446.6 363.7,453.9 368.7,460.5 C373.7,467.1 379.2,475.1 383.8,480.2 C387.1,483.9 389.8,486.6 393.0,489.0 C395.9,491.1 399.1,493.4 402.1,494.0 C404.7,494.5 407.5,493.8 410.0,493.0 C412.4,492.2 414.6,491.4 416.7,489.4 C419.7,486.6 423.4,480.9 424.9,476.6 C426.2,472.9 425.8,469.3 426.2,465.6 L426.2,465.6 C427.0,464.9 427.8,463.5 428.6,463.6 C429.4,463.7 430.2,465.5 431.0,466.5 L431.0,466.5 C430.8,471.7 432.0,477.2 430.4,482.1 C428.7,487.3 424.3,493.4 420.4,496.7 C417.3,499.3 413.3,500.6 410.0,501.5 C407.3,502.2 405.1,502.9 402.1,502.2 C397.1,501.0 389.1,495.6 383.8,491.2 C378.8,487.0 374.7,481.2 371.0,476.6 C368.0,472.9 366.1,470.0 363.2,466.0 C359.4,460.7 355.2,453.4 350.4,447.7 C345.5,441.8 339.4,436.7 333.9,431.2 Z"/>
<path d="M284.1,503.8 C288.4,508.1 292.1,513.4 297.0,516.8 C301.8,520.2 308.0,522.8 313.3,524.3 C318.0,525.6 322.7,526.1 327.3,526.0 C331.7,525.9 335.9,525.4 340.3,523.8 C345.6,521.9 351.7,518.4 356.5,514.6 C361.4,510.7 365.2,505.3 369.5,500.6 L369.5,500.6 C370.1,500.2 370.9,499.9 371.4,499.3 C371.9,498.7 372.3,497.7 372.3,496.9 C372.3,496.2 371.7,495.2 371.2,494.8 C370.7,494.4 369.9,494.5 369.3,494.4 L369.3,494.4 C365.0,498.4 361.3,503.1 356.5,506.5 C351.6,509.9 345.5,512.9 340.3,514.6 C335.8,516.1 331.2,516.6 327.3,516.8 C324.1,517.0 322.0,516.8 318.7,516.2 C314.1,515.4 307.6,514.0 302.4,511.4 C296.7,508.5 291.6,503.1 286.2,498.9 L286.2,498.9 C285.6,498.8 284.9,498.4 284.4,498.5 C283.9,498.6 283.2,499.2 283.0,499.8 C282.7,500.4 282.8,501.5 283.0,502.2 C283.2,502.8 283.7,503.3 284.1,503.8 Z"/>
</g>
</defs>
<use href="#dsil" fill="#000" mask="url(#dm)"/>
<use href="#dfeat"/>
<g fill="#222" stroke="#222" stroke-width="0.9">
<rect x="186" y="297.9" width="30" height="39"/>
<rect x="443" y="297.9" width="30.3" height="39"/>
<rect x="300" y="311.3" width="60" height="17.3"/>
</g>
<path d="M261.6,290.5 C265.6,287.5 273.6,286.9 282.6,287.0 C296.6,287.1 305.6,297.5 305.6,311.0 C305.6,326.5 297.6,339.1 284.6,349.6 C273.6,358.1 266.6,364.0 261.6,364.0 C256.6,364.0 249.6,358.1 238.6,349.6 C225.6,339.1 217.6,326.5 217.6,311.0 C217.6,297.5 226.6,287.1 240.6,287.0 C249.6,286.9 257.6,287.5 261.6,290.5 Z" fill="#222" stroke="#222" stroke-width="27.6" stroke-linejoin="round"/>
<path d="M397.0,290.5 C401.0,287.5 409.0,286.9 418.0,287.0 C432.0,287.1 441.0,297.5 441.0,311.0 C441.0,326.5 433.0,339.1 420.0,349.6 C409.0,358.1 402.0,364.0 397.0,364.0 C392.0,364.0 385.0,358.1 374.0,349.6 C361.0,339.1 353.0,326.5 353.0,311.0 C353.0,297.5 362.0,287.1 376.0,287.0 C385.0,286.9 393.0,287.5 397.0,290.5 Z" fill="#222" stroke="#222" stroke-width="27.6" stroke-linejoin="round"/>
<g fill="#90caf9">
<rect x="186" y="297.9" width="30" height="39"/>
<rect x="443" y="297.9" width="30.3" height="39"/>
<rect x="300" y="311.3" width="60" height="17.3"/>
</g>
<path d="M261.6,290.5 C265.6,287.5 273.6,286.9 282.6,287.0 C296.6,287.1 305.6,297.5 305.6,311.0 C305.6,326.5 297.6,339.1 284.6,349.6 C273.6,358.1 266.6,364.0 261.6,364.0 C256.6,364.0 249.6,358.1 238.6,349.6 C225.6,339.1 217.6,326.5 217.6,311.0 C217.6,297.5 226.6,287.1 240.6,287.0 C249.6,286.9 257.6,287.5 261.6,290.5 Z" fill="#90caf9" stroke="#90caf9" stroke-width="26" stroke-linejoin="round"/>
<path d="M397.0,290.5 C401.0,287.5 409.0,286.9 418.0,287.0 C432.0,287.1 441.0,297.5 441.0,311.0 C441.0,326.5 433.0,339.1 420.0,349.6 C409.0,358.1 402.0,364.0 397.0,364.0 C392.0,364.0 385.0,358.1 374.0,349.6 C361.0,339.1 353.0,326.5 353.0,311.0 C353.0,297.5 362.0,287.1 376.0,287.0 C385.0,286.9 393.0,287.5 397.0,290.5 Z" fill="#90caf9" stroke="#90caf9" stroke-width="26" stroke-linejoin="round"/>
<path d="M261.6,290.5 C265.6,287.5 273.6,286.9 282.6,287.0 C296.6,287.1 305.6,297.5 305.6,311.0 C305.6,326.5 297.6,336.8 284.6,347.3 C273.6,355.8 266.6,361.7 261.6,361.7 C256.6,361.7 249.6,355.8 238.6,347.3 C225.6,336.8 217.6,326.5 217.6,311.0 C217.6,297.5 226.6,287.1 240.6,287.0 C249.6,286.9 257.6,287.5 261.6,290.5 Z" fill="#ee9799" stroke="#2a2a2a" stroke-width="0.9"/>
<path d="M397.0,290.5 C401.0,287.5 409.0,286.9 418.0,287.0 C432.0,287.1 441.0,297.5 441.0,311.0 C441.0,326.5 433.0,336.8 420.0,347.3 C409.0,355.8 402.0,361.7 397.0,361.7 C392.0,361.7 385.0,355.8 374.0,347.3 C361.0,336.8 353.0,326.5 353.0,311.0 C353.0,297.5 362.0,287.1 376.0,287.0 C385.0,286.9 393.0,287.5 397.0,290.5 Z" fill="#ee9799" stroke="#2a2a2a" stroke-width="0.9"/>

<rect x="59" y="99.5" width="15.5" height="502" fill="#f3f4f6"/>
<text x="61.5" y="101.90" font-size="10.6" fill="#55575a">0</text>
<rect x="59" y="83" width="828" height="16.5" fill="#f3f4f6"/>
<line x1="59" y1="83.6" x2="887" y2="83.6" stroke="#e4e5e7" stroke-width="1"/>
<line x1="74.55" y1="84" x2="74.55" y2="100" stroke="#e2e3e5" stroke-width="1"/>
<text x="76.15" y="95.8" font-size="10.6" fill="#55575a">0</text>
<line x1="97.82" y1="92.2" x2="97.82" y2="100" stroke="#c8c8c8" stroke-width="1"/>
<line x1="121.09" y1="84" x2="121.09" y2="100" stroke="#c3c3c3" stroke-width="1.1"/>
<text x="122.69" y="95.8" font-size="10.6" fill="#55575a">1</text>
<line x1="144.36" y1="92.2" x2="144.36" y2="100" stroke="#c8c8c8" stroke-width="1"/>
<line x1="167.63" y1="84" x2="167.63" y2="100" stroke="#c3c3c3" stroke-width="1.1"/>
<text x="169.23" y="95.8" font-size="10.6" fill="#55575a">2</text>
<line x1="190.90" y1="92.2" x2="190.90" y2="100" stroke="#c8c8c8" stroke-width="1"/>
<line x1="214.17" y1="84" x2="214.17" y2="100" stroke="#c3c3c3" stroke-width="1.1"/>
<text x="215.77" y="95.8" font-size="10.6" fill="#55575a">3</text>
<line x1="237.44" y1="92.2" x2="237.44" y2="100" stroke="#c8c8c8" stroke-width="1"/>
<line x1="260.71" y1="84" x2="260.71" y2="100" stroke="#c3c3c3" stroke-width="1.1"/>
<text x="262.31" y="95.8" font-size="10.6" fill="#55575a">4</text>
<line x1="283.98" y1="92.2" x2="283.98" y2="100" stroke="#c8c8c8" stroke-width="1"/>
<line x1="307.25" y1="84" x2="307.25" y2="100" stroke="#c3c3c3" stroke-width="1.1"/>
<text x="308.85" y="95.8" font-size="10.6" fill="#55575a">5</text>
<line x1="330.52" y1="92.2" x2="330.52" y2="100" stroke="#c8c8c8" stroke-width="1"/>
<line x1="353.79" y1="84" x2="353.79" y2="100" stroke="#c3c3c3" stroke-width="1.1"/>
<text x="355.39" y="95.8" font-size="10.6" fill="#55575a">6</text>
<line x1="377.06" y1="92.2" x2="377.06" y2="100" stroke="#c8c8c8" stroke-width="1"/>
<line x1="400.33" y1="84" x2="400.33" y2="100" stroke="#c3c3c3" stroke-width="1.1"/>
<text x="401.93" y="95.8" font-size="10.6" fill="#55575a">7</text>
<line x1="423.60" y1="92.2" x2="423.60" y2="100" stroke="#c8c8c8" stroke-width="1"/>
<line x1="446.87" y1="84" x2="446.87" y2="100" stroke="#c3c3c3" stroke-width="1.1"/>
<text x="448.47" y="95.8" font-size="10.6" fill="#55575a">8</text>
<line x1="470.14" y1="92.2" x2="470.14" y2="100" stroke="#c8c8c8" stroke-width="1"/>
<line x1="493.41" y1="84" x2="493.41" y2="100" stroke="#c3c3c3" stroke-width="1.1"/>
<text x="495.01" y="95.8" font-size="10.6" fill="#55575a">9</text>
<line x1="516.68" y1="92.2" x2="516.68" y2="100" stroke="#c8c8c8" stroke-width="1"/>
<line x1="539.95" y1="84" x2="539.95" y2="100" stroke="#c3c3c3" stroke-width="1.1"/>
<text x="541.55" y="95.8" font-size="10.6" fill="#55575a">10</text>
<line x1="563.22" y1="92.2" x2="563.22" y2="100" stroke="#c8c8c8" stroke-width="1"/>
<line x1="586.49" y1="84" x2="586.49" y2="100" stroke="#c3c3c3" stroke-width="1.1"/>
<text x="588.09" y="95.8" font-size="10.6" fill="#55575a">11</text>
<line x1="609.76" y1="92.2" x2="609.76" y2="100" stroke="#c8c8c8" stroke-width="1"/>
<line x1="633.03" y1="84" x2="633.03" y2="100" stroke="#c3c3c3" stroke-width="1.1"/>
<text x="634.63" y="95.8" font-size="10.6" fill="#55575a">12</text>
<line x1="656.30" y1="92.2" x2="656.30" y2="100" stroke="#c8c8c8" stroke-width="1"/>
<line x1="679.57" y1="84" x2="679.57" y2="100" stroke="#c3c3c3" stroke-width="1.1"/>
<text x="681.17" y="95.8" font-size="10.6" fill="#55575a">13</text>
<line x1="702.84" y1="92.2" x2="702.84" y2="100" stroke="#c8c8c8" stroke-width="1"/>
<line x1="726.11" y1="84" x2="726.11" y2="100" stroke="#c3c3c3" stroke-width="1.1"/>
<text x="727.71" y="95.8" font-size="10.6" fill="#55575a">14</text>
<line x1="749.38" y1="92.2" x2="749.38" y2="100" stroke="#c8c8c8" stroke-width="1"/>
<line x1="772.65" y1="84" x2="772.65" y2="100" stroke="#c3c3c3" stroke-width="1.1"/>
<text x="774.25" y="95.8" font-size="10.6" fill="#55575a">15</text>
<line x1="795.92" y1="92.2" x2="795.92" y2="100" stroke="#c8c8c8" stroke-width="1"/>
<line x1="819.19" y1="84" x2="819.19" y2="100" stroke="#c3c3c3" stroke-width="1.1"/>
<text x="820.79" y="95.8" font-size="10.6" fill="#55575a">16</text>
<line x1="842.46" y1="92.2" x2="842.46" y2="100" stroke="#c8c8c8" stroke-width="1"/>
<line x1="865.73" y1="84" x2="865.73" y2="100" stroke="#c3c3c3" stroke-width="1.1"/>
<text x="867.33" y="95.8" font-size="10.6" fill="#55575a">17</text>
<line x1="59" y1="138.25" x2="74.5" y2="138.25" stroke="#c3c3c3" stroke-width="1.1"/>
<text x="61.50" y="148.55" font-size="10.6" fill="#55575a">1</text>
<line x1="59" y1="184.90" x2="74.5" y2="184.90" stroke="#c3c3c3" stroke-width="1.1"/>
<text x="61.50" y="195.20" font-size="10.6" fill="#55575a">2</text>
<line x1="59" y1="231.55" x2="74.5" y2="231.55" stroke="#c3c3c3" stroke-width="1.1"/>
<text x="61.50" y="241.85" font-size="10.6" fill="#55575a">3</text>
<line x1="59" y1="278.20" x2="74.5" y2="278.20" stroke="#c3c3c3" stroke-width="1.1"/>
<text x="61.50" y="288.50" font-size="10.6" fill="#55575a">4</text>
<line x1="59" y1="324.85" x2="74.5" y2="324.85" stroke="#c3c3c3" stroke-width="1.1"/>
<text x="61.50" y="335.15" font-size="10.6" fill="#55575a">5</text>
<line x1="59" y1="371.50" x2="74.5" y2="371.50" stroke="#c3c3c3" stroke-width="1.1"/>
<text x="61.50" y="381.80" font-size="10.6" fill="#55575a">6</text>
<line x1="59" y1="418.15" x2="74.5" y2="418.15" stroke="#c3c3c3" stroke-width="1.1"/>
<text x="61.50" y="428.45" font-size="10.6" fill="#55575a">7</text>
<line x1="59" y1="464.80" x2="74.5" y2="464.80" stroke="#c3c3c3" stroke-width="1.1"/>
<text x="61.50" y="475.10" font-size="10.6" fill="#55575a">8</text>
<line x1="59" y1="511.45" x2="74.5" y2="511.45" stroke="#c3c3c3" stroke-width="1.1"/>
<text x="61.50" y="521.75" font-size="10.6" fill="#55575a">9</text>
<line x1="59" y1="558.10" x2="74.5" y2="558.10" stroke="#c3c3c3" stroke-width="1.1"/>
<text x="61.50" y="568.40" font-size="10.6" fill="#55575a">10</text>
<line x1="66.8" y1="114.22" x2="74.5" y2="114.22" stroke="#c8c8c8" stroke-width="1"/>
<line x1="66.8" y1="160.88" x2="74.5" y2="160.88" stroke="#c8c8c8" stroke-width="1"/>
<line x1="66.8" y1="207.53" x2="74.5" y2="207.53" stroke="#c8c8c8" stroke-width="1"/>
<line x1="66.8" y1="254.18" x2="74.5" y2="254.18" stroke="#c8c8c8" stroke-width="1"/>
<line x1="66.8" y1="300.82" x2="74.5" y2="300.82" stroke="#c8c8c8" stroke-width="1"/>
<line x1="66.8" y1="347.47" x2="74.5" y2="347.47" stroke="#c8c8c8" stroke-width="1"/>
<line x1="66.8" y1="394.12" x2="74.5" y2="394.12" stroke="#c8c8c8" stroke-width="1"/>
<line x1="66.8" y1="440.78" x2="74.5" y2="440.78" stroke="#c8c8c8" stroke-width="1"/>
<line x1="66.8" y1="487.43" x2="74.5" y2="487.43" stroke="#c8c8c8" stroke-width="1"/>
<line x1="66.8" y1="534.07" x2="74.5" y2="534.07" stroke="#c8c8c8" stroke-width="1"/>
<line x1="66.8" y1="580.72" x2="74.5" y2="580.72" stroke="#c8c8c8" stroke-width="1"/>
<line x1="59" y1="99.5" x2="887" y2="99.5" stroke="#c0c0c0" stroke-width="1"/>
<line x1="74.5" y1="99.5" x2="74.5" y2="601" stroke="#c0c0c0" stroke-width="1"/>
</svg>

<!-- zoom ctrl -->
<div class="a" style="left:83.3px;top:546.3px;width:73.5px;height:32.6px;background:rgba(240,240,240,0.55);border-radius:4px"></div>
<svg class="a" style="left:0;top:0" width="200" height="601" fill="none" stroke="#c9cacc" stroke-width="0.9">
 <circle cx="95.9" cy="563.8" r="8.2"/>
 <circle cx="144.4" cy="563.8" r="8.2"/>
 <path d="M92,563.8 H99.8 M140.5,563.8 H148.3 M144.4,559.9 V567.7"/>
</svg>
<div class="a" style="left:109.6px;top:559.3px;font-size:10px;color:#c6c7c9">75%</div>

<!-- right panel -->
<div class="a" style="left:887px;top:41px;width:212px;height:560px;background:#f4f5f7"></div>
<div class="a" style="left:887px;top:41px;width:212px;height:58.5px;background:#e1e1e3"></div>
<div class="a" style="left:887px;top:59px;width:212px;height:1px;background:#c9cacc"></div>
<div class="a" style="left:887px;top:58.5px;width:107.5px;height:1.6px;background:#5c666f"></div>
<div class="a" style="left:887px;top:98.6px;width:212px;height:1.4px;background:#c9cacc"></div>
<div class="a" style="left:925.8px;top:45.0px;font-size:10px;color:#4a5058">Layers</div>
<div class="a" style="left:1022.8px;top:45.0px;font-size:10.4px;color:#4a5058">Color Sync</div>
<svg class="a" style="left:0;top:0" width="1099" height="601" fill="none" stroke="#bcbec1" stroke-width="1" stroke-linejoin="round">
 <!-- group -->
 <rect x="903.5" y="67" width="14" height="11.5"/>
 <rect x="906.5" y="69.5" width="6.5" height="5"/>
 <rect x="909" y="71.5" width="6.5" height="5"/>
 <circle cx="903.5" cy="67" r="1.2" fill="#e1e1e3"/><circle cx="917.5" cy="67" r="1.2" fill="#e1e1e3"/><circle cx="903.5" cy="78.5" r="1.2" fill="#e1e1e3"/><circle cx="917.5" cy="78.5" r="1.2" fill="#e1e1e3"/>
 <!-- ungroup -->
 <rect x="957.5" y="66" width="6.5" height="6.5"/>
 <rect x="961" y="69.5" width="9" height="9.5"/>
 <circle cx="957.5" cy="66" r="1.1" fill="#e1e1e3"/><circle cx="964" cy="66" r="1.1" fill="#e1e1e3"/><circle cx="957.5" cy="72.5" r="1.1" fill="#e1e1e3"/>
 <circle cx="970" cy="69.5" r="1.1" fill="#e1e1e3"/><circle cx="961" cy="79" r="1.1" fill="#e1e1e3"/><circle cx="970" cy="79" r="1.1" fill="#e1e1e3"/>
 <!-- duplicate -->
 <rect x="1017.3" y="65.3" width="10" height="12.5"/>
 <rect x="1020.2" y="68" width="10.5" height="12" fill="#e1e1e3"/>
 <path d="M1025.5,70 L1026.6,72.8 L1029.3,72.9 L1027.2,74.7 L1028,77.3 L1025.5,75.8 L1023,77.3 L1023.8,74.7 L1021.7,72.9 L1024.4,72.8 Z" stroke-width="0.8"/>
 <!-- delete -->
 <path d="M1071.5,67.5 H1084.5 M1075.5,67.5 V65.8 H1080.5 V67.5 M1072.8,67.8 L1073.8,79.5 H1082.2 L1083.2,67.8 M1075.3,70.8 V76.3 M1078,70.8 V76.3 M1080.7,70.8 V76.3" stroke-width="1"/>
</svg>
<div class="a bl" style="left:898.8px;top:85.1px">Group</div>
<div class="a bl" style="left:946.5px;top:85.1px">UnGroup</div>
<div class="a bl" style="left:1005.8px;top:85.1px">Duplicate</div>
<div class="a bl" style="left:1065.8px;top:85.1px">Delete</div>

<!-- layer rows -->
<div class="rsep" style="top:164.7px"></div>
<div class="rsep" style="top:231.2px"></div>
<div class="rsep" style="top:297.8px"></div>
<div class="rsep" style="top:365.2px"></div>
<svg class="a" style="left:0;top:0" width="1099" height="601">
 <g fill="#33383d">
  <path d="M895.5,111.7 H902 L898.75,115.8 Z"/>
  <path d="M895.5,178.2 H902 L898.75,182.3 Z"/>
  <path d="M895.5,244.7 H902 L898.75,248.8 Z"/>
  <path d="M895.5,311.2 H902 L898.75,315.3 Z"/>
 </g>
 <g id="eye">
  <path d="M1077.3,113.7 C1079.4,108.9 1087.3,108.9 1089.4,113.7 C1087.3,118.1 1079.4,118.1 1077.3,113.7 Z" fill="#f4f5f7" stroke="#2f3438" stroke-width="1.4" stroke-linejoin="round"/>
  <circle cx="1083.35" cy="113.3" r="2.9" fill="#2f3438"/>
  <circle cx="1082.5" cy="112.3" r="0.8" fill="#e8e9eb"/>
 </g>
 <use href="#eye" y="66.5"/>
 <use href="#eye" y="133"/>
 <use href="#eye" y="199.5"/>
 <!-- hearts -->
 <path id="lh" d="M925.5,135.3 C926.6,134.5 928.9,134.3 931.4,134.3 C935.3,134.3 937.9,137.3 937.9,141.1 C937.9,145.4 935.6,148.3 932.0,151.3 C928.9,153.6 926.9,155.3 925.5,155.3 C924.1,155.3 922.1,153.6 919.0,151.3 C915.4,148.3 913.1,145.4 913.1,141.1 C913.1,137.3 915.7,134.3 919.6,134.3 C922.1,134.3 924.4,134.5 925.5,135.3 Z" fill="#ef9599" stroke="#c98084" stroke-width="0.7"/>
 <use href="#lh" y="66.5"/>
 
</svg>
<div class="a lr" style="left:910.6px;top:107.2px">Slice Result</div>
<div class="a lr" style="left:910.6px;top:173.7px">Slice Result</div>
<div class="a lr" style="left:910.6px;top:240.2px">Slice Result</div>
<div class="a lr" style="left:910.6px;top:306.7px">Slice Result</div>
<div class="a cut" style="left:946.7px;top:138.6px">Cut</div>
<div class="a cut" style="left:946.7px;top:205.1px">Cut</div>
<div class="a cut" style="left:946.7px;top:271.6px">Cut</div>
<div class="a cut" style="left:946.7px;top:338.1px">Cut</div>
<svg class="a" style="left:0;top:0" width="1099" height="601">
<g transform="translate(912.8,272.7) scale(0.0875) translate(-186,-273.6)">
<g fill="#8ec8f6">
<rect x="186" y="297.9" width="30" height="39"/>
<rect x="443" y="297.9" width="30.3" height="39"/>
<rect x="300" y="311.3" width="60" height="17.3"/>
</g>
<path d="M261.6,290.5 C265.6,287.5 273.6,286.9 282.6,287.0 C296.6,287.1 305.6,297.5 305.6,311.0 C305.6,326.5 297.6,339.1 284.6,349.6 C273.6,358.1 266.6,364.0 261.6,364.0 C256.6,364.0 249.6,358.1 238.6,349.6 C225.6,339.1 217.6,326.5 217.6,311.0 C217.6,297.5 226.6,287.1 240.6,287.0 C249.6,286.9 257.6,287.5 261.6,290.5 Z" fill="#8ec8f6" stroke="#8ec8f6" stroke-width="26" stroke-linejoin="round"/>
<path d="M397.0,290.5 C401.0,287.5 409.0,286.9 418.0,287.0 C432.0,287.1 441.0,297.5 441.0,311.0 C441.0,326.5 433.0,339.1 420.0,349.6 C409.0,358.1 402.0,364.0 397.0,364.0 C392.0,364.0 385.0,358.1 374.0,349.6 C361.0,339.1 353.0,326.5 353.0,311.0 C353.0,297.5 362.0,287.1 376.0,287.0 C385.0,286.9 393.0,287.5 397.0,290.5 Z" fill="#8ec8f6" stroke="#8ec8f6" stroke-width="26" stroke-linejoin="round"/>
<path d="M261.6,290.5 C265.6,287.5 273.6,286.9 282.6,287.0 C296.6,287.1 305.6,297.5 305.6,311.0 C305.6,326.5 297.6,336.8 284.6,347.3 C273.6,355.8 266.6,361.7 261.6,361.7 C256.6,361.7 249.6,355.8 238.6,347.3 C225.6,336.8 217.6,326.5 217.6,311.0 C217.6,297.5 226.6,287.1 240.6,287.0 C249.6,286.9 257.6,287.5 261.6,290.5 Z" fill="#f4f5f7"/>
<path d="M397.0,290.5 C401.0,287.5 409.0,286.9 418.0,287.0 C432.0,287.1 441.0,297.5 441.0,311.0 C441.0,326.5 433.0,336.8 420.0,347.3 C409.0,355.8 402.0,361.7 397.0,361.7 C392.0,361.7 385.0,355.8 374.0,347.3 C361.0,336.8 353.0,326.5 353.0,311.0 C353.0,297.5 362.0,287.1 376.0,287.0 C385.0,286.9 393.0,287.5 397.0,290.5 Z" fill="#f4f5f7"/>
</g>
<g transform="translate(912.7,331.5) scale(0.0607) translate(-131.4,-131)">
<use href="#dsil" fill="#fff" stroke="#fff" stroke-width="28" stroke-linejoin="round"/>
<use href="#dsil" fill="#000" mask="url(#dm2)"/>
<use href="#dfeat"/>
</g></svg>

<!-- blank canvas -->
<div class="a" style="left:887px;top:518.8px;width:212px;height:1.5px;background:#cdced0"></div>
<div class="a" style="left:895.4px;top:524.4px;width:45.4px;height:30.3px;background:#fff;border:1px solid #6b7077;border-radius:2px"></div>
<div class="a" style="left:958.7px;top:536.0px;font-size:8.6px;color:#33383d;letter-spacing:-0.1px">Blank Canvas</div>
<svg class="a" style="left:0;top:0" width="1099" height="601">
 <path d="M1064.6,540.6 C1066.5,536.8 1074.4,536.8 1076.3,540.6 C1074.4,544.4 1066.5,544.4 1064.6,540.6 Z" fill="#f4f5f7" stroke="#3a3f45" stroke-width="1.4" stroke-linejoin="round"/>
 <circle cx="1070.45" cy="540.4" r="2.3" fill="#3a3f45"/>
 <path d="M1065.2,535.4 L1076.2,546" stroke="#f4f5f7" stroke-width="2.4"/>
 <path d="M1065.2,535.4 L1076.2,546" stroke="#3a3f45" stroke-width="1"/>
</svg>

<!-- bottom toolbar -->
<div class="a" style="left:887px;top:561px;width:212px;height:40px;background:#e1e1e3"></div>
<div class="a" style="left:887px;top:599.8px;width:212px;height:1.2px;background:#c2c3c5"></div>
<svg class="a" style="left:0;top:0" width="1099" height="601" fill="none" stroke="#bcbec1" stroke-width="1" stroke-linejoin="round" stroke-linecap="round">
 <!-- slice -->
 <path d="M905.5,566.3 H898.3 V574 H902.5"/>
 <circle cx="906.5" cy="575.5" r="5"/>
 <circle cx="908.5" cy="576.8" r="4.2"/>
 <!-- weld -->
 <path d="M936.5,566.3 H944.5 V570 C948.5,570 950.8,572.8 950.8,575.8 C950.8,578.5 948.5,580.8 945.5,580.8 C942.5,580.8 940.2,578.8 940,575.8 H936.5 Z"/>
 <!-- attach -->
 <path d="M979,568.5 C980,566.5 982.5,566.5 983.5,568.2 L989.8,577.3 C990.8,579 990,580.6 988.6,581 C987.2,581.3 986.2,580.6 985.5,579.5 L980.5,572 C980,571 980.4,570.2 981.2,570 C982,569.8 982.6,570.3 983,571 L987.3,577.2"/>
 <!-- flatten -->
 <path d="M1022,574.5 L1029,570.8 L1036,574.5 L1029,578.2 Z M1022,577.3 L1029,581 L1036,577.3 M1029,566 V575 M1026.8,572.5 L1029,575 L1031.2,572.5"/>
 <!-- contour -->
 <rect x="1069.8" y="566.6" width="14.5" height="13.8" rx="1"/>
 <circle cx="1077" cy="573.5" r="4.5" stroke-dasharray="1.6 1.3"/>
</svg>
<div class="a bl" style="left:895.8px;top:586.1px">Slice</div>
<div class="a bl" style="left:934.2px;top:586.1px">Weld</div>
<div class="a bl" style="left:972px;top:586.1px">Attach</div>
<div class="a bl" style="left:1016px;top:586.1px">Flatten</div>
<div class="a bl" style="left:1061.5px;top:586.1px">Contour</div>
<div class="a" style="left:-2px;top:598px;width:4.5px;height:5px;border-radius:50%;background:#3a3030"></div>
</body></html>
